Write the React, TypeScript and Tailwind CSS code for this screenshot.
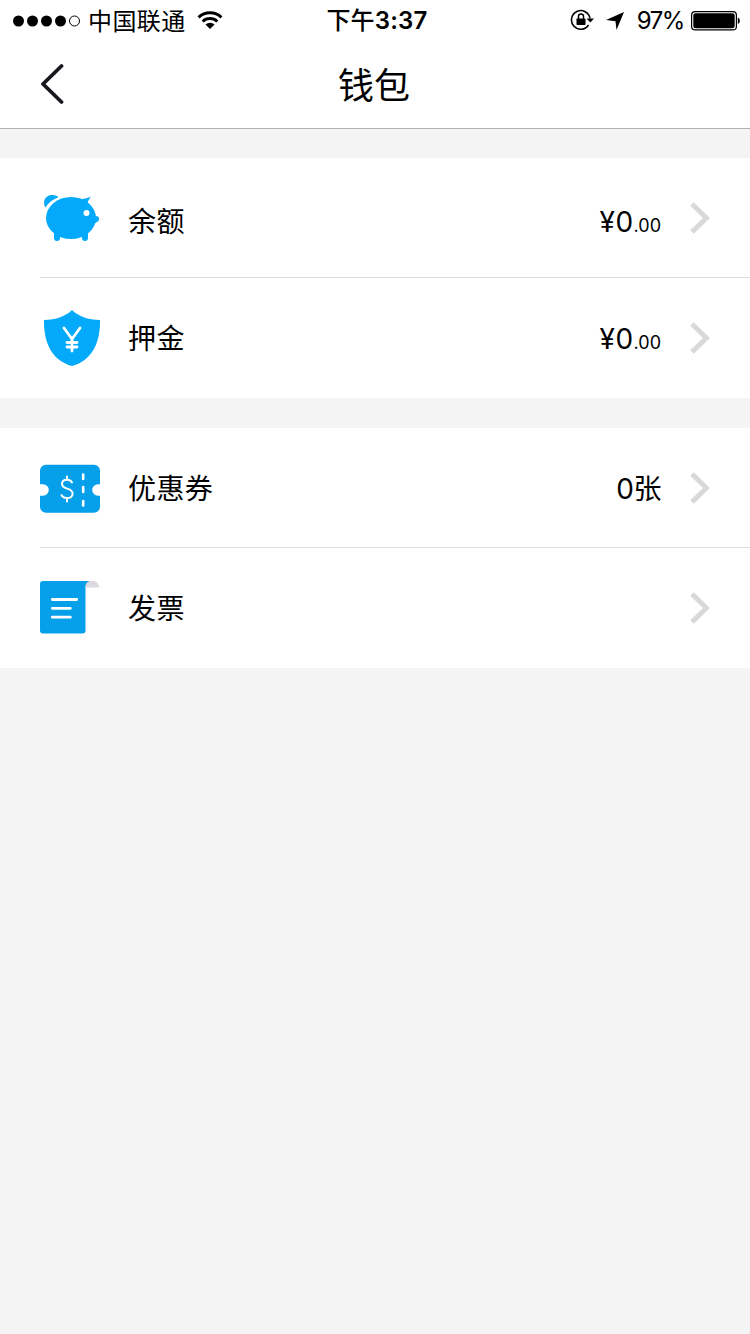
import type { ReactNode } from 'react';

function PiggyIcon() {
  return (
    <svg width="60" height="60" viewBox="0 0 60 60" fill="#03a9fa">
      <path d="M5.500 19.500C2.400 14.500 4.400 8 11 7c3.200-.4 5.600.4 7.500 2.200C13 11 8.500 14.500 5.500 19.500z" />
      <ellipse cx="31" cy="30" rx="25" ry="21" />
      <path d="M40 11.500c3.500-.4 6.500-1.200 11-3-1.400 1.600-2.400 3.600-3.400 6.200z" />
      <path d="M53 27c2 1 3.500 1 5 1.600 1.600 1.600 1.400 3.600 0 4.800-1.500.6-3 1.600-5 3.600z" />
      <rect x="14" y="42" width="6" height="11" rx="3" />
      <rect x="42" y="42" width="6" height="11" rx="3" />
      <circle cx="46.500" cy="25" r="3" fill="#fff" />
    </svg>
  );
}

function ShieldIcon() {
  return (
    <svg width="60" height="60" viewBox="0 0 60 60" fill="none">
      <path
        d="M32 2C38 8 48 12 60 12C60.500 36 51 53 32 58C13 53 3.500 36 4 12C16 12 26 8 32 2z"
        fill="#03a9fa"
      />
      <path
        d="M24 20l8 11 8-11M32 31v12M27 34.500h10M27 39h10"
        stroke="#fff"
        strokeWidth="2.800"
        strokeLinecap="round"
        strokeLinejoin="round"
      />
    </svg>
  );
}

function TicketIcon() {
  return (
    <svg width="60" height="60" viewBox="0 0 60 60" fill="none">
      <path
        d="M6 6.700h48a6 6 0 0 1 6 6v13.500h-2a5.800 5.800 0 0 0 0 11.600h2v11a6 6 0 0 1-6 6H6a6 6 0 0 1-6-6v-11h3a5.800 5.800 0 0 0 0-11.600H0V12.700a6 6 0 0 1 6-6z"
        fill="#059fea"
      />
      <path
        d="M32 24.500c-1-1.800-3-2.700-5-2.700-3 0-5 1.600-5 4.200 0 6 10.600 3.200 10.600 9.400 0 3-2.400 4.700-5.400 4.700-2.600 0-4.800-1.100-5.700-3M27 18.500v3.300M27 40v3.500"
        stroke="#fff"
        strokeWidth="2"
        strokeLinecap="round"
      />
      <path d="M43.200 16.500v4.500M43.200 29v5M43.200 43v4.500" stroke="#fff" strokeWidth="2.600" strokeLinecap="round" />
    </svg>
  );
}

function InvoiceIcon() {
  return (
    <svg width="60" height="60" viewBox="0 0 60 60" fill="none">
      <path
        d="M3 3h48c-3 .5-5.500 2.500-5.500 6v43.500a3 3 0 0 1-3 3H3a3 3 0 0 1-3-3V6a3 3 0 0 1 3-3z"
        fill="#059fea"
      />
      <path d="M45.500 9.500C45.500 5.500 48 3 51 3h2c3.500 0 6 3 6 6.500z" fill="#dcd8e0" />
      <path
        d="M12.300 21.500h24.400M12.300 30.300h18M12.300 39.200h18"
        stroke="#fff"
        strokeWidth="2.800"
        strokeLinecap="round"
      />
    </svg>
  );
}

function StatusBar() {
  return (
    <div className="grid h-10 grid-cols-[1fr_auto_1fr] items-center text-2xl">
      <div className="flex items-center pt-px pl-[13px]">
        <svg width="67" height="12" viewBox="0 0 67 12">
          <circle cx="5.500" cy="6" r="5.500" />
          <circle cx="19.500" cy="6" r="5.500" />
          <circle cx="33.500" cy="6" r="5.500" />
          <circle cx="47.500" cy="6" r="5.500" />
          <circle cx="61.500" cy="6" r="5" fill="none" stroke="#000" />
        </svg>
        <span className="ml-2 pt-0.5 leading-9 tracking-[0.4px]">中国联通</span>
        <svg className="mb-0.5 ml-[11px]" width="26" height="20" viewBox="0 0 26 20" fill="none">
          <path d="M1.600 7.400a16.500 16.500 0 0 1 22.800 0M5.700 11.500a10.700 10.700 0 0 1 14.600 0" stroke="#000" strokeWidth="3" />
          <path d="M13 19l-4.500-4.500a6.500 6.500 0 0 1 9 0z" fill="#000" />
        </svg>
      </div>
      <span className="pt-0.5 pl-1 leading-9 font-semibold tracking-[0.2px]">
        <span className="font-medium">下午</span>3:37
      </span>
      <div className="flex items-center justify-end pt-px pr-2.5">
        <svg className="mb-0.5" width="24" height="22" viewBox="0 0 24 22" fill="none">
          <path d="M20 9.500a9.300 9.300 0 1 0-1.400 6.500" stroke="#000" strokeWidth="1.500" />
          <path d="M16.500 9.500H24l-3.700 4z" fill="#000" />
          <rect x="6.500" y="9.500" width="9" height="6.500" rx=".8" fill="#000" />
          <path d="M8.500 10V7.500a2.500 2.500 0 0 1 5 0V10" stroke="#000" strokeWidth="1.500" />
        </svg>
        <svg className="ml-3" width="18" height="18" viewBox="0 0 18 18">
          <path d="M18 0L10.500 18 9.500 9.200 0 8z" />
        </svg>
        <span className="ml-[13px] pt-px leading-9 tracking-[-1.4px]">97%</span>
        <svg className="ml-[7px]" width="49" height="20" viewBox="0 0 49 20">
          <rect x=".6" y=".6" width="44.800" height="18.300" rx="3.500" fill="none" stroke="#000" strokeWidth="1.200" />
          <rect x="2.300" y="2.300" width="41.400" height="14.900" rx="2.200" />
          <path d="M46.800 6.500c2.700.7 2.700 5.800 0 6.500z" />
        </svg>
      </div>
    </div>
  );
}

function Row({ icon, label, shifted, children }: {
  icon: ReactNode;
  label: string;
  shifted?: boolean;
  children?: ReactNode;
}) {
  return (
    <li className="flex h-[120px] items-center pr-10">
      {icon}
      <div className={`ml-7 flex flex-1 items-center justify-between text-[28px] leading-10 ${shifted ? 'pt-2' : 'pt-0.5'}`}>
        <span className="tracking-[0.4px]">{label}</span>
        <span>{children}</span>
      </div>
      <svg className="ml-[29px]" width="20" height="32" viewBox="0 0 20 32" fill="none">
        <path d="M2 2l14.500 14L2 30" stroke="#d9d9d9" strokeWidth="5" />
      </svg>
    </li>
  );
}

function Amount() {
  return (
    <>
      <span className="tracking-[0.5px]">¥0</span>
      <span className="text-lg">.00</span>
    </>
  );
}

function Divider() {
  return <li className="-mt-px h-px bg-[#dedede]" />;
}

export default function App() {
  return (
    <div className="min-h-screen w-[750px] bg-[#f4f4f4] font-['Inter','Noto_Sans_CJK_SC',sans-serif] text-black">
      <header className="h-[129px] border-b border-[#b0b0b0] bg-white">
        <StatusBar />
        <div className="grid h-[88px] grid-cols-[1fr_auto_1fr] items-center">
          <svg className="ml-10" width="24" height="42" viewBox="0 0 24 42" fill="none">
            <path d="M21.500 3L3 21l18.500 18" stroke="#17191c" strokeWidth="3.800" strokeLinecap="round" strokeLinejoin="round" />
          </svg>
          <h1 className="pt-1 pr-0.5 text-4xl">钱包</h1>
        </div>
      </header>

      <ul className="mt-[29px] bg-white pl-10">
        <Row icon={<PiggyIcon />} label="余额" shifted>
          <Amount />
        </Row>
        <Divider />
        <Row icon={<ShieldIcon />} label="押金">
          <Amount />
        </Row>
      </ul>

      <ul className="mt-[30px] bg-white pl-10">
        <Row icon={<TicketIcon />} label="优惠券">
          <span className="tracking-[-0.5px]">0张</span>
        </Row>
        <Divider />
        <Row icon={<InvoiceIcon />} label="发票" />
      </ul>
    </div>
  );
}
